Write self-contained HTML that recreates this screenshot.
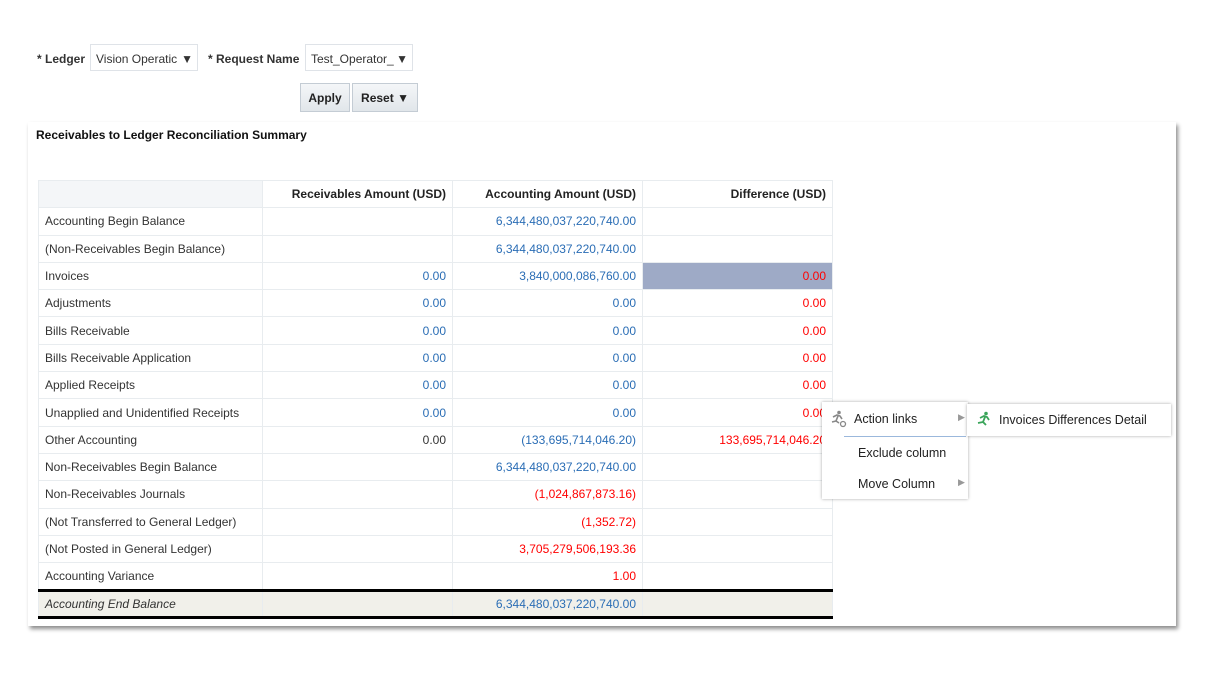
<!DOCTYPE html><html><head><style>
body{margin:0;width:1220px;height:680px;background:#fff;font-family:"Liberation Sans",Arial,sans-serif;font-size:12px;color:#333;position:relative;overflow:hidden}
.a{position:absolute}
.sel{position:absolute;top:44px;height:27px;border:1px solid #dfe3e8;background:#fff;box-sizing:border-box;line-height:28px;padding-left:5px;color:#333}
.btn{position:absolute;top:83px;height:29px;border:1px solid #c4ccd4;background:linear-gradient(#f4f6f8,#e1e6ea);box-sizing:border-box;line-height:29px;font-weight:bold;color:#222;text-align:center}
table{position:absolute;left:38px;top:180px;border-collapse:collapse;width:794px;table-layout:fixed}
td,th{height:26.3px;border:1px solid #e8ecef;padding:0 6px;font-size:12px;white-space:nowrap;overflow:visible}
th{text-align:right;font-weight:bold;color:#222;background:#fff}
td.n{text-align:right;color:#2a6db5}
td.r{text-align:right;color:#f00}
tr.e td{background:#f1f0ea;font-style:italic;border-top:3px solid #000;border-bottom:3px solid #000;height:24px}
.m{position:absolute;background:#fff;box-shadow:0 0 3px rgba(0,0,0,.35);font-size:12.5px;color:#222}
</style></head><body>
<div class="a" style="left:37px;top:52px;font-weight:bold;color:#333">* Ledger</div>
<div class="sel" style="left:90px;width:108px">Vision Operatic <span style="position:absolute;right:4px">▼</span></div>
<div class="a" style="left:208px;top:52px;font-weight:bold;color:#333">* Request Name</div>
<div class="sel" style="left:305px;width:108px">Test_Operator_ <span style="position:absolute;right:4px">▼</span></div>
<div class="btn" style="left:300px;width:50px">Apply</div>
<div class="btn" style="left:352px;width:66px">Reset ▼</div>
<div class="a" style="left:28px;top:122px;width:1148px;height:504px;background:#fff;box-shadow:2px 3px 4px rgba(0,0,0,.45)"></div>
<div class="a" style="left:36px;top:128px;font-weight:bold;color:#111">Receivables to Ledger Reconciliation Summary</div>
<table>
<colgroup><col style="width:224px"><col style="width:190px"><col style="width:190px"><col style="width:190px"></colgroup>
<tr><th style="background:#f4f6f8"></th><th>Receivables Amount (USD)</th><th>Accounting Amount (USD)</th><th>Difference (USD)</th></tr>
<tr><td>Accounting Begin Balance</td><td></td><td class="n">6,344,480,037,220,740.00</td><td></td></tr>
<tr><td>(Non-Receivables Begin Balance)</td><td></td><td class="n">6,344,480,037,220,740.00</td><td></td></tr>
<tr><td>Invoices</td><td class="n">0.00</td><td class="n">3,840,000,086,760.00</td><td class="r" style="background:#9eaac6">0.00</td></tr>
<tr><td>Adjustments</td><td class="n">0.00</td><td class="n">0.00</td><td class="r">0.00</td></tr>
<tr><td>Bills Receivable</td><td class="n">0.00</td><td class="n">0.00</td><td class="r">0.00</td></tr>
<tr><td>Bills Receivable Application</td><td class="n">0.00</td><td class="n">0.00</td><td class="r">0.00</td></tr>
<tr><td>Applied Receipts</td><td class="n">0.00</td><td class="n">0.00</td><td class="r">0.00</td></tr>
<tr><td>Unapplied and Unidentified Receipts</td><td class="n">0.00</td><td class="n">0.00</td><td class="r">0.00</td></tr>
<tr><td>Other Accounting</td><td style="text-align:right">0.00</td><td class="n">(133,695,714,046.20)</td><td class="r">133,695,714,046.20</td></tr>
<tr><td>Non-Receivables Begin Balance</td><td></td><td class="n">6,344,480,037,220,740.00</td><td></td></tr>
<tr><td>Non-Receivables Journals</td><td></td><td class="r">(1,024,867,873.16)</td><td></td></tr>
<tr><td>(Not Transferred to General Ledger)</td><td></td><td class="r">(1,352.72)</td><td></td></tr>
<tr><td>(Not Posted in General Ledger)</td><td></td><td class="r">3,705,279,506,193.36</td><td></td></tr>
<tr><td>Accounting Variance</td><td></td><td class="r">1.00</td><td></td></tr>
<tr class="e"><td>Accounting End Balance</td><td></td><td class="n" style="font-style:normal">6,344,480,037,220,740.00</td><td></td></tr>
</table>
<div class="m" style="left:822px;top:402px;width:146px;height:97px">
<svg class="a" style="left:8px;top:8px" width="18" height="18" viewBox="0 0 18 18"><circle cx="9" cy="2.5" r="1.8" fill="#888"/><path d="M3 7l4-2 3 1 2 3M8 6l-2 5 3 2M6 11l-4 1" stroke="#888" stroke-width="1.6" fill="none"/><circle cx="13" cy="14" r="2.5" fill="none" stroke="#888" stroke-width="1.3"/></svg>
<div class="a" style="left:32px;top:10px">Action links</div><div class="a" style="left:136px;top:10px;color:#999;font-size:9px">▶</div>
<div class="a" style="left:22px;top:34px;width:122px;border-top:1px solid #9bb8dc"></div>
<div class="a" style="left:36px;top:44px">Exclude column</div>
<div class="a" style="left:36px;top:75px">Move Column</div><div class="a" style="left:136px;top:75px;color:#999;font-size:9px">▶</div>
</div>
<div class="m" style="left:967px;top:404px;width:204px;height:32px">
<svg class="a" style="left:9px;top:7px" width="16" height="18" viewBox="0 0 16 18"><circle cx="10" cy="2.5" r="1.8" fill="#3aa55a"/><path d="M4 7l4-2 3 1 2 3M9 6l-2 5 3 3M7 11l-5 1" stroke="#3aa55a" stroke-width="1.8" fill="none"/></svg>
<div class="a" style="left:32px;top:9px">Invoices Differences Detail</div>
</div>
</body></html>
